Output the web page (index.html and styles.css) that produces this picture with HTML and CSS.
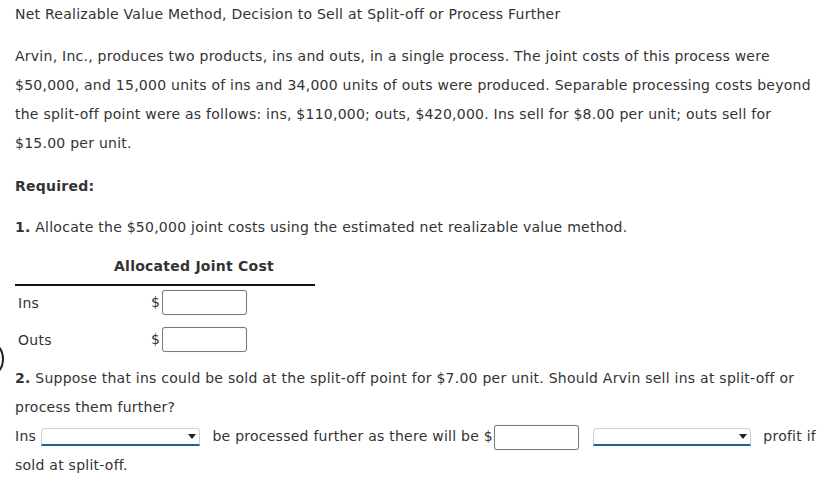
FILE: index.html
```html
<!DOCTYPE html>
<html lang="en">
<head>
    <meta charset="UTF-8">
    <title>Net Realizable Value Method</title>
    <link rel="stylesheet" href="styles.css">
</head>
<body>
    <div class="edge-ring"></div>
    <div class="question">
        <h1 class="title">Net Realizable Value Method, Decision to Sell at Split-off or Process Further</h1>
        <p class="intro">Arvin, Inc., produces two products, ins and outs, in a single process. The joint costs of this process were $50,000, and 15,000 units of ins and 34,000 units of outs were produced. Separable processing costs beyond the split-off point were as follows: ins, $110,000; outs, $420,000. Ins sell for $8.00 per unit; outs sell for $15.00 per unit.</p>
        <p class="required">Required:</p>
        <p class="part"><b>1.</b> Allocate the $50,000 joint costs using the estimated net realizable value method.</p>

        <table class="alloc">
            <tr>
                <th class="alloc-head" colspan="2">Allocated Joint Cost</th>
            </tr>
            <tr>
                <td class="alloc-label">Ins</td>
                <td class="alloc-amount">$<input type="text" class="amount"></td>
            </tr>
            <tr>
                <td class="alloc-label">Outs</td>
                <td class="alloc-amount">$<input type="text" class="amount"></td>
            </tr>
        </table>

        <p class="part part2"><b>2.</b> Suppose that ins could be sold at the split-off point for $7.00 per unit. Should Arvin sell ins at split-off or process them further?<br>Ins <span class="pick"><select><option></option></select></span> be processed further as there will be $<input type="text" class="amount amount-inline"> <span class="pick pick-second"><select><option></option></select></span> profit if sold at split-off.</p>
    </div>
</body>
</html>
```

FILE: styles.css
```css
body {
    margin: 0;
    padding: 0;
    background: #fff;
    color: #333;
    font-family: 'DejaVu Sans', Verdana, sans-serif;
    font-size: 14px;
    letter-spacing: 0.25px;
}

.question {
    padding: 0 8px 0 15px;
}

.title {
    margin: 0;
    font-size: 14px;
    font-weight: normal;
    line-height: 29px;
}

.intro {
    margin: 13px 0 0;
    line-height: 29px;
}

.required {
    margin: 14px 0 0;
    font-weight: bold;
    line-height: 29px;
}

.part {
    margin: 12px 0 0;
    line-height: 29px;
}

.alloc {
    width: 300px;
    border-collapse: collapse;
    margin-top: 8px;
}

.alloc-head {
    text-align: left;
    padding: 6px 0 8px 99px;
    line-height: 20px;
    border-bottom: 2px solid #111;
}

.alloc-label {
    width: 133px;
    height: 25px;
    padding: 4px 0 8px 3px;
    vertical-align: middle;
}

.alloc-amount {
    padding: 4px 0 8px;
    vertical-align: middle;
}

.amount {
    box-sizing: border-box;
    width: 85px;
    height: 25px;
    margin: 0 0 0 1px;
    padding: 0 4px;
    border: 1px solid #7a7a7a;
    border-radius: 3px;
    box-shadow: 0 0 1px rgba(0, 0, 0, 0.25);
    vertical-align: middle;
    font: inherit;
}

.alloc-amount .amount {
    margin-left: 2px;
}

.part2 {
    margin-top: 4px;
}

.amount-inline {
    margin-right: 9px;
}

/* dropdowns with blue underline */
.pick {
    position: relative;
    display: inline-block;
    vertical-align: middle;
    margin-right: 8px;
}

.pick select {
    display: block;
    box-sizing: border-box;
    width: 159px;
    height: 18px;
    margin: 0;
    padding: 0;
    border: 1px solid #d0d0d0;
    border-bottom: 2px solid #23608d;
    border-radius: 4px 4px 0 0;
    background: #fff;
    appearance: none;
    -webkit-appearance: none;
    font: inherit;
}

.pick::after {
    content: "";
    position: absolute;
    right: 4px;
    top: 6px;
    border-left: 4px solid transparent;
    border-right: 4px solid transparent;
    border-top: 5px solid #222;
}

.pick-second {
    margin-right: 8px;
}

.pick-second select {
    width: 158px;
}

/* cut-off ring at the left edge */
.edge-ring {
    position: absolute;
    left: -22px;
    top: 342px;
    width: 22px;
    height: 30px;
    border: 2.5px solid #222;
    border-radius: 50%;
}
```
